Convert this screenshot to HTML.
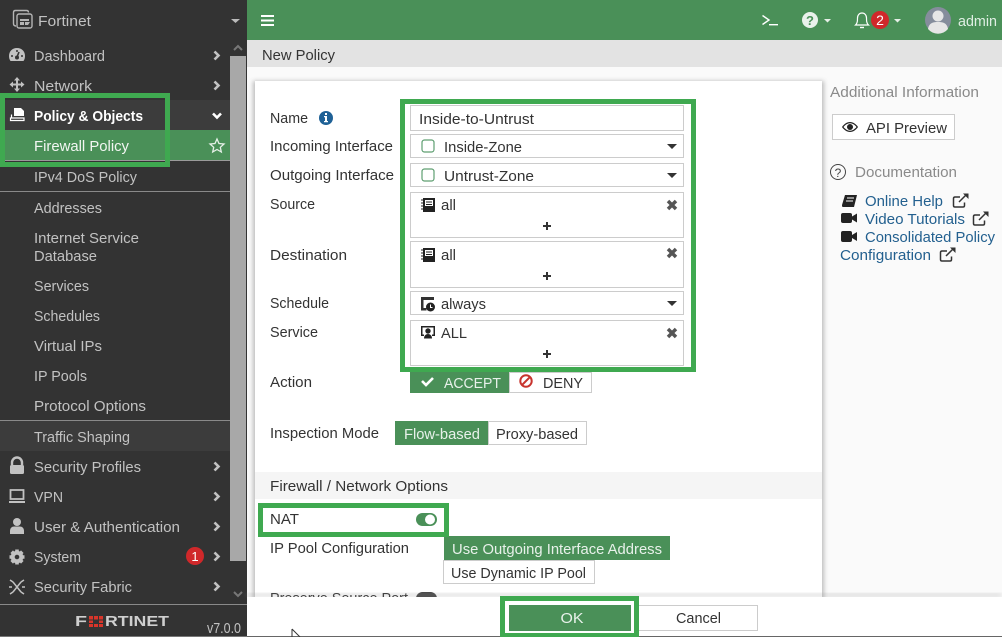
<!DOCTYPE html>
<html><head><meta charset="utf-8"><style>
html,body{margin:0;padding:0;width:1002px;height:637px;overflow:hidden;background:#fafafa}
svg{display:block;position:absolute;left:0;top:0}
text{font-family:"Liberation Sans",sans-serif;font-size:15px}
.n text{fill:#c2c2c2}
.f text{fill:#333}
.l text{fill:#23608f}
</style></head><body>
<svg width="1002" height="637" viewBox="0 0 1002 637" xmlns="http://www.w3.org/2000/svg">
<defs><filter id="s" x="-5%" y="-5%" width="110%" height="110%"><feGaussianBlur stdDeviation="2.5"/></filter></defs>
<rect width="1002" height="637" fill="#fafafa"/>
<!-- sidebar -->
<rect width="247" height="637" fill="#333"/>
<rect x="0" y="100" width="230" height="30" fill="#3c3c3c"/>
<rect x="0" y="130" width="230" height="30" fill="#4a9058"/>
<rect x="0" y="160" width="230" height="1" fill="#9a9a9a"/>
<rect x="0" y="191" width="230" height="1" fill="#8a8a8a"/>
<rect x="0" y="420" width="230" height="31" fill="#3c3c3c"/>
<rect x="0" y="420" width="230" height="1" fill="#8a8a8a"/>
<rect x="230" y="56" width="16" height="505" fill="#a8a8a8"/>
<path d="M234 50l4-4 4 4M234 592l4 4 4-4" fill="none" stroke="#777" stroke-width="2"/>
<rect x="0" y="604" width="247" height="1" fill="#8a8a8a"/>
<rect x="0" y="636" width="247" height="1" fill="#777"/>
<path d="M231 19h9l-4.500 4z" fill="#bbb"/>
<g fill="none" stroke="#b5b5b5" stroke-width="1.400">
<path d="M16 26q-2.500 0-2.500-2.500v-11q0-2 2-2h11q2 0 2 2"/><rect x="17" y="14" width="15" height="14" rx="2"/>
</g>
<path d="M20 19h9v2h-9zM20 22h4v3h-4zM25 22h5l-2 3h-3z" fill="#b5b5b5"/>
<!-- sidebar icons -->
<path d="M17 48c-5 0-8 3.500-8 8 0 2 .5 3.500 1.500 5h13c1-1.500 1.500-3 1.500-5 0-4.500-3-8-8-8z" fill="#c2c2c2"/>
<path d="M17 57l2-5" stroke="#333" stroke-width="1.600"/><circle cx="17" cy="57.500" r="2" fill="#333"/><circle cx="12" cy="56" r="1" fill="#333"/><circle cx="22" cy="56" r="1" fill="#333"/><circle cx="17" cy="51" r="1" fill="#333"/>
<path d="M17 77l3 3.500h-2v3h3v-2l3.500 3-3.500 3v-2h-3v3h2l-3 3.500-3-3.500h2v-3h-3v2l-3.500-3 3.500-3v2h3v-3h-2z" fill="#c2c2c2"/>
<path d="M14 108h7l3 3v5h-10z" fill="#fff"/>
<path d="M11.500 114.500v3.500h-1v2.500h13.500v-2.500h-13" stroke="#fff" stroke-width="1.200" fill="none"/>
<path d="M12 465v-2.500a5 5 0 0 1 10 0v2.500" fill="none" stroke="#c2c2c2" stroke-width="2.400"/><rect x="10" y="465" width="14" height="9" rx="1.500" fill="#c2c2c2"/>
<path d="M10.500 490h13v9h-13z" fill="none" stroke="#c2c2c2" stroke-width="1.800"/><rect x="9" y="501" width="16" height="2" fill="#c2c2c2"/>
<circle cx="17" cy="522" r="4" fill="#c2c2c2"/><path d="M10 534v-3c0-3 2-4.500 4-4.500h6c2 0 4 1.500 4 4.500v3z" fill="#c2c2c2"/>
<g transform="translate(17 557)" fill="#c2c2c2"><circle r="4.300" fill="none" stroke="#c2c2c2" stroke-width="4"/><path d="M-1.800-7.500h3.600v3h-3.600zM-1.800 4.500h3.600v3h-3.600zM4.500-1.800h3v3.600h-3zM-7.500-1.800h3v3.600h-3z"/><path d="M-1.800-7.500h3.600v3h-3.600zM-1.800 4.500h3.600v3h-3.600zM4.500-1.800h3v3.600h-3zM-7.500-1.800h3v3.600h-3z" transform="rotate(45)"/></g>
<g stroke="#c2c2c2" stroke-width="1.500" fill="none"><path d="M13 582l8 10M21 582l-8 10M9 587h3M22 587h3M10 580l3 2M24 580l-3 2M10 594l3-2M24 594l-3-2"/></g>
<!-- chevrons -->
<g fill="none" stroke="#c2c2c2" stroke-width="2.600"><path d="M214.500 51.500l4 4-4 4M214.500 81.500l4 4-4 4M214.500 462.500l4 4-4 4M214.500 492.500l4 4-4 4M214.500 522.500l4 4-4 4M214.500 552.500l4 4-4 4M214.500 582.500l4 4-4 4"/></g>
<path d="M213 113.500l4 4 4-4" fill="none" stroke="#fff" stroke-width="2.600"/>
<path d="M217 139l2 4.500 5 .5-3.700 3.300 1 4.700-4.300-2.500-4.300 2.500 1-4.700-3.700-3.300 5-.5z" fill="none" stroke="#e6f0e8" stroke-width="1.300"/>
<circle cx="195" cy="556" r="9" fill="#d0282a"/><text x="195" y="561" text-anchor="middle" style="font-size:13px" fill="#fff">1</text>
<g class="n">
<text x="38" y="26" textLength="53" lengthAdjust="spacingAndGlyphs">Fortinet</text>
<text x="34" y="61" textLength="71" lengthAdjust="spacingAndGlyphs">Dashboard</text>
<text x="34" y="91" textLength="58" lengthAdjust="spacingAndGlyphs">Network</text>
<text x="34" y="121" textLength="109" lengthAdjust="spacingAndGlyphs" style="font-weight:bold;fill:#fff">Policy &amp; Objects</text>
<text x="34" y="151" textLength="95" lengthAdjust="spacingAndGlyphs" style="fill:#f2f6f2">Firewall Policy</text>
<text x="34" y="182" textLength="103" lengthAdjust="spacingAndGlyphs">IPv4 DoS Policy</text>
<text x="34" y="213" textLength="68" lengthAdjust="spacingAndGlyphs">Addresses</text>
<text x="34" y="243" textLength="105" lengthAdjust="spacingAndGlyphs">Internet Service</text>
<text x="34" y="261" textLength="63" lengthAdjust="spacingAndGlyphs">Database</text>
<text x="34" y="291" textLength="55" lengthAdjust="spacingAndGlyphs">Services</text>
<text x="34" y="321" textLength="66" lengthAdjust="spacingAndGlyphs">Schedules</text>
<text x="34" y="351" textLength="68" lengthAdjust="spacingAndGlyphs">Virtual IPs</text>
<text x="34" y="381" textLength="53" lengthAdjust="spacingAndGlyphs">IP Pools</text>
<text x="34" y="411" textLength="112" lengthAdjust="spacingAndGlyphs">Protocol Options</text>
<text x="34" y="442" textLength="96" lengthAdjust="spacingAndGlyphs">Traffic Shaping</text>
<text x="34" y="472" textLength="107" lengthAdjust="spacingAndGlyphs">Security Profiles</text>
<text x="34" y="502" textLength="29" lengthAdjust="spacingAndGlyphs">VPN</text>
<text x="34" y="532" textLength="146" lengthAdjust="spacingAndGlyphs">User &amp; Authentication</text>
<text x="34" y="562" textLength="47" lengthAdjust="spacingAndGlyphs">System</text>
<text x="34" y="592" textLength="98" lengthAdjust="spacingAndGlyphs">Security Fabric</text>
<text x="207" y="633" textLength="34" lengthAdjust="spacingAndGlyphs">v7.0.0</text>
</g>
<!-- logo -->
<text x="75" y="626" textLength="12" lengthAdjust="spacingAndGlyphs" style="font-size:15px;font-weight:bold;fill:#cfcfcf">F</text>
<text x="105" y="626" textLength="64" lengthAdjust="spacingAndGlyphs" style="font-size:15px;font-weight:bold;fill:#cfcfcf">RTINET</text>
<path d="M89 616h4v3.500h-4zM94 616h4v3.500h-4zM99 616h4v3.500h-4zM89 620.500h4v2.500h-4zM99 620.500h4v2.500h-4zM89 624h4v3h-4zM94 624h4v3h-4zM99 624h4v3h-4z" fill="#d8352a"/>
<!-- header -->
<rect x="247" width="755" height="40" fill="#4a9058"/>
<path d="M261 15h13v2h-13zM261 19.500h13v2h-13zM261 24h13v2h-13z" fill="#fff"/>
<path d="M762.500 15.500l6.500 4.500-6.500 4.500" fill="none" stroke="#fff" stroke-width="1.400"/><rect x="769" y="24" width="9" height="1.400" fill="#fff"/>
<circle cx="810" cy="20" r="8" fill="#e9f1eb"/>
<text x="810" y="25" text-anchor="middle" style="font-size:13px;font-weight:bold" fill="#4a9058">?</text>
<path d="M824 19h7l-3.500 3.500zM894 19h7l-3.500 3.500z" fill="#e6efe8"/>
<path d="M855.500 25c2-2 2-4 2-7 0-3 2-5 4.500-5s4.500 2 4.500 5c0 3 0 5 2 7z" fill="none" stroke="#fff" stroke-width="1.200"/><path d="M860 27.500h4" stroke="#fff" stroke-width="1.400"/>
<circle cx="880" cy="20" r="9" fill="#d0282a"/><text x="880" y="25" text-anchor="middle" style="font-size:14px" fill="#fff">2</text>
<circle cx="938" cy="20" r="13" fill="#858d9c"/><circle cx="938" cy="16" r="5.500" fill="#e6e6e6"/><path d="M928 29c1-6 5-7 10-7s9 1 10 7a13 13 0 0 1-20 0z" fill="#e6e6e6"/>
<text x="958" y="26" textLength="39" lengthAdjust="spacingAndGlyphs" fill="#dfeee3">admin</text>
<!-- subheader -->
<rect x="247" y="40" width="755" height="27" fill="#e3e3e3"/>
<text x="262" y="60" textLength="73" lengthAdjust="spacingAndGlyphs" fill="#333">New Policy</text>
<!-- card -->
<rect x="253" y="81" width="571" height="530" fill="#bbb" filter="url(#s)"/>
<rect x="255" y="81" width="567" height="530" fill="#fff"/>
<rect x="255" y="472" width="567" height="27" fill="#f5f5f5"/>
<g class="f">
<text x="270" y="123" textLength="38" lengthAdjust="spacingAndGlyphs">Name</text>
<text x="270" y="151" textLength="123" lengthAdjust="spacingAndGlyphs">Incoming Interface</text>
<text x="270" y="180" textLength="124" lengthAdjust="spacingAndGlyphs">Outgoing Interface</text>
<text x="270" y="209" textLength="45" lengthAdjust="spacingAndGlyphs">Source</text>
<text x="270" y="260" textLength="77" lengthAdjust="spacingAndGlyphs">Destination</text>
<text x="270" y="308" textLength="59" lengthAdjust="spacingAndGlyphs">Schedule</text>
<text x="270" y="337" textLength="48" lengthAdjust="spacingAndGlyphs">Service</text>
<text x="270" y="387" textLength="42" lengthAdjust="spacingAndGlyphs">Action</text>
<text x="270" y="438" textLength="109" lengthAdjust="spacingAndGlyphs">Inspection Mode</text>
<text x="270" y="491" textLength="178" lengthAdjust="spacingAndGlyphs">Firewall / Network Options</text>
<text x="270" y="524" textLength="29" lengthAdjust="spacingAndGlyphs">NAT</text>
<text x="270" y="553" textLength="139" lengthAdjust="spacingAndGlyphs">IP Pool Configuration</text>
<text x="270" y="603" textLength="138" lengthAdjust="spacingAndGlyphs">Preserve Source Port</text>
</g>
<circle cx="326" cy="118" r="7" fill="#1f6196"/><path d="M324 116h3v5h1v1.200h-4V121h1v-3.800h-1zM325 113h2v2h-2z" fill="#fff"/>
<!-- inputs -->
<g fill="#fff" stroke="#ccc" stroke-width="1">
<rect x="410.500" y="105.500" width="273" height="25"/>
<rect x="410.500" y="134.500" width="273" height="23"/>
<rect x="410.500" y="163.500" width="273" height="23"/>
<rect x="410.500" y="192.500" width="273" height="45"/>
<rect x="410.500" y="241.500" width="273" height="46"/>
<rect x="410.500" y="291.500" width="273" height="23"/>
<rect x="410.500" y="320.500" width="273" height="45"/>
</g>
<g class="f">
<text x="419" y="124" textLength="115" lengthAdjust="spacingAndGlyphs">Inside-to-Untrust</text>
<text x="444" y="152" textLength="78" lengthAdjust="spacingAndGlyphs">Inside-Zone</text>
<text x="444" y="181" textLength="90" lengthAdjust="spacingAndGlyphs">Untrust-Zone</text>
<text x="441" y="210" textLength="15" lengthAdjust="spacingAndGlyphs">all</text>
<text x="441" y="260" textLength="15" lengthAdjust="spacingAndGlyphs">all</text>
<text x="441" y="309" textLength="45" lengthAdjust="spacingAndGlyphs">always</text>
<text x="441" y="338" textLength="26" lengthAdjust="spacingAndGlyphs">ALL</text>
</g>
<rect x="422" y="140" width="12" height="12" rx="2.500" fill="none" stroke="#5f9f72" stroke-width="1.200"/>
<rect x="422" y="169" width="12" height="12" rx="2.500" fill="none" stroke="#5f9f72" stroke-width="1.200"/>
<path d="M667 144h10l-5 5zM667 173h10l-5 5zM667 301h10l-5 5z" fill="#333"/>
<g><path d="M423 198h12v14h-12z" fill="#222"/><path d="M421 200h2M421 203h2M421 206h2M421 209h2" stroke="#222"/><path d="M425 200h8v6h-8z" fill="#fff"/><path d="M426 202h6M426 204.500h6" stroke="#222"/></g>
<g transform="translate(0 50)"><path d="M423 198h12v14h-12z" fill="#222"/><path d="M421 200h2M421 203h2M421 206h2M421 209h2" stroke="#222"/><path d="M425 200h8v6h-8z" fill="#fff"/><path d="M426 202h6M426 204.500h6" stroke="#222"/></g>
<path d="M421 297h13v3h-10.500v8h3v2.500h-5.500z" fill="#333"/><circle cx="430.500" cy="307" r="4.500" fill="#222"/><path d="M430.500 304.500v3h2" stroke="#fff" fill="none"/>
<path d="M421 326h14v10h-3v-1.500h1.500v-7h-11v7h1.500v1.500h-3z" fill="#222"/><circle cx="428" cy="331" r="2.700" fill="#222"/><path d="M424 338.500c0-3 2-4.500 4-4.500s4 1.500 4 4.500z" fill="#222"/>
<g fill="#333"><path d="M543 225h3v-3h2v3h3v2h-3v3h-2v-3h-3zM543 275h3v-3h2v3h3v2h-3v3h-2v-3h-3zM543 353h3v-3h2v3h3v2h-3v3h-2v-3h-3z"/></g>
<path d="M668 201l8 8M676 201l-8 8M668 249l8 8M676 249l-8 8M668 329l8 8M676 329l-8 8" stroke="#555" stroke-width="3.500"/>
<!-- action -->
<rect x="410" y="372" width="99" height="21" fill="#4a9058"/>
<rect x="509.500" y="372.500" width="82" height="20" fill="#fff" stroke="#ccc"/>
<path d="M422 381l4 4 7-7" fill="none" stroke="#fff" stroke-width="2.600"/>
<text x="444" y="388" textLength="57" lengthAdjust="spacingAndGlyphs" fill="#e8f1ea">ACCEPT</text>
<circle cx="526" cy="381" r="5.700" fill="none" stroke="#c8342e" stroke-width="2"/><path d="M522 385l8-8" stroke="#c8342e" stroke-width="2"/>
<text x="543" y="388" textLength="40" lengthAdjust="spacingAndGlyphs" fill="#333">DENY</text>
<rect x="395" y="421" width="93" height="24" fill="#4a9058"/>
<rect x="488.500" y="421.500" width="98" height="23" fill="#fff" stroke="#ccc"/>
<text x="404" y="439" textLength="76" lengthAdjust="spacingAndGlyphs" fill="#e8f1ea">Flow-based</text>
<text x="496" y="439" textLength="82" lengthAdjust="spacingAndGlyphs" fill="#333">Proxy-based</text>
<!-- nat -->
<rect x="416" y="513" width="21" height="13" rx="6.500" fill="#4a9058"/><circle cx="430" cy="519.500" r="5" fill="#fff"/>
<rect x="444" y="536" width="226" height="24" fill="#4a9058"/>
<text x="452" y="554" textLength="210" lengthAdjust="spacingAndGlyphs" fill="#e8f1ea">Use Outgoing Interface Address</text>
<rect x="443.500" y="560.500" width="151" height="23" fill="#fff" stroke="#ccc"/>
<text x="451" y="578" textLength="135" lengthAdjust="spacingAndGlyphs" fill="#333">Use Dynamic IP Pool</text>
<rect x="416" y="592" width="21" height="13" rx="6.500" fill="#444"/>
<!-- footer -->
<rect x="247" y="593" width="755" height="4" fill="#999" filter="url(#s)" opacity=".3"/>
<rect x="247" y="597" width="755" height="39" fill="#fff"/>
<rect x="247" y="636" width="755" height="1" fill="#666"/>
<rect x="509" y="605" width="122" height="26" fill="#4a9058"/>
<text x="572" y="623" text-anchor="middle" textLength="23" lengthAdjust="spacingAndGlyphs" fill="#e8f1ea">OK</text>
<rect x="638.500" y="605.500" width="119" height="25" fill="#fff" stroke="#ccc"/>
<text x="676" y="623" textLength="45" lengthAdjust="spacingAndGlyphs" fill="#333">Cancel</text>
<path d="M292 629v8M292 629l8 8" fill="none" stroke="#333" stroke-width="1"/>
<!-- right -->
<text x="830" y="97" textLength="149" lengthAdjust="spacingAndGlyphs" fill="#8a8a8a">Additional Information</text>
<rect x="832.500" y="114.500" width="122" height="25" fill="#fff" stroke="#ccc"/>
<path d="M842 127c2-3 5-5 8-5s6 2 8 5c-2 3-5 5-8 5s-6-2-8-5z" fill="#222"/><path d="M843.500 127c2-2.300 4-3.700 6.500-3.700s4.500 1.400 6.500 3.700c-2 2.300-4 3.700-6.500 3.700s-4.500-1.400-6.500-3.700z" fill="#fff"/><circle cx="850" cy="127" r="3" fill="#222"/>
<text x="866" y="133" textLength="81" lengthAdjust="spacingAndGlyphs" fill="#333">API Preview</text>
<circle cx="838" cy="172" r="7.500" fill="none" stroke="#444" stroke-width="1"/><text x="838" y="177" text-anchor="middle" style="font-size:12px" fill="#444">?</text>
<text x="855" y="177" textLength="102" lengthAdjust="spacingAndGlyphs" fill="#8a8a8a">Documentation</text>
<path d="M845 195h12l-3 12h-11c-1 0-1-1-1-2z" fill="#222"/><path d="M847 198h7M846 201h7" stroke="#fff"/>
<g fill="#222"><rect x="841" y="213" width="11" height="10" rx="2"/><path d="M852 216.500l5-3v9l-5-3z"/><rect x="841" y="231" width="11" height="11" rx="2"/><path d="M852 235l5-3v9l-5-3z"/></g>
<g class="l">
<text x="865" y="206" textLength="78" lengthAdjust="spacingAndGlyphs">Online Help</text>
<text x="865" y="224" textLength="100" lengthAdjust="spacingAndGlyphs">Video Tutorials</text>
<text x="865" y="242" textLength="130" lengthAdjust="spacingAndGlyphs">Consolidated Policy</text>
<text x="840" y="260" textLength="91" lengthAdjust="spacingAndGlyphs">Configuration</text>
</g>
<g><path d="M960 197h-5q-1.500 0-1.500 1.500v7q0 1.500 1.500 1.500h8q1.500 0 1.500-1.500v-3M959 202l8-8" fill="none" stroke="#333" stroke-width="1.500"/><path d="M963 193.500h5.500v5.500z" fill="#333"/></g>
<g transform="translate(20 18)"><path d="M960 197h-5q-1.500 0-1.500 1.500v7q0 1.500 1.500 1.500h8q1.500 0 1.500-1.500v-3M959 202l8-8" fill="none" stroke="#333" stroke-width="1.500"/><path d="M963 193.500h5.500v5.500z" fill="#333"/></g>
<g transform="translate(-13 54)"><path d="M960 197h-5q-1.500 0-1.500 1.500v7q0 1.500 1.500 1.500h8q1.500 0 1.500-1.500v-3M959 202l8-8" fill="none" stroke="#333" stroke-width="1.500"/><path d="M963 193.500h5.500v5.500z" fill="#333"/></g>
<!-- green highlights -->
<g fill="none" stroke="#3fa950">
<rect x="2.500" y="95.500" width="165" height="69" stroke-width="5"/>
<rect x="402.500" y="101.500" width="291" height="268" stroke-width="5"/>
<rect x="260.500" y="505.500" width="186" height="29" stroke-width="5"/>
<rect x="502.500" y="598.500" width="134" height="37" stroke-width="5"/>
</g>
</svg>
</body></html>
